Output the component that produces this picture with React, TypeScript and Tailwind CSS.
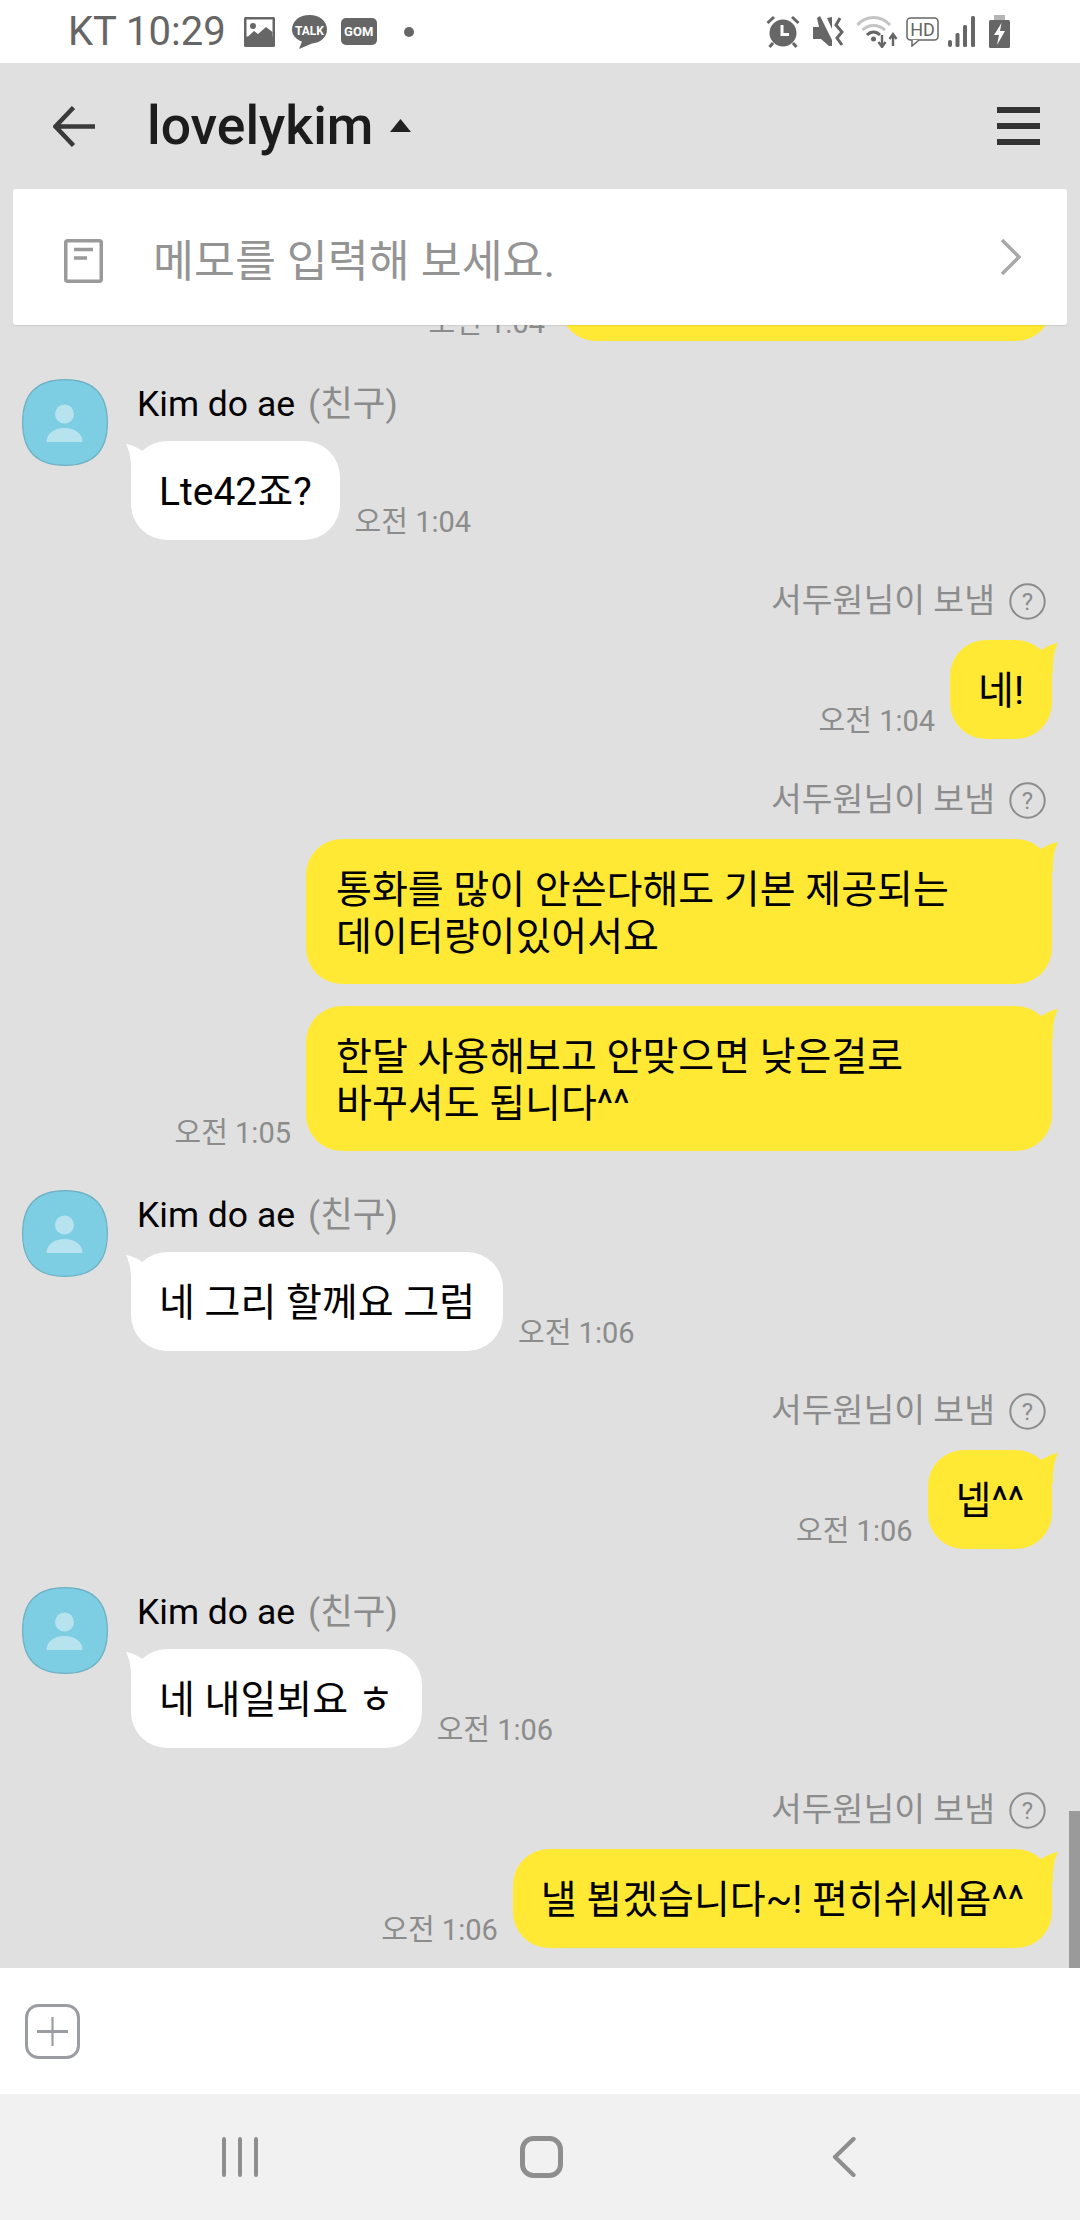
import React from "react";

function Avatar() {
  return (
    <svg width="86" height="87" viewBox="0 0 86 87" className="shrink-0">
      <path d="M43 0.6 C70 0.6 85.4 14 85.4 43.5 C85.4 73 70 86.4 43 86.4 C16 86.4 0.6 73 0.6 43.5 C0.6 14 16 0.6 43 0.6 Z" fill="#7dcde3" stroke="#6fb1c4" strokeWidth="1.2" />
      <circle cx="42.5" cy="35" r="9.5" fill="#b7e3ef" />
      <path d="M24.5 63 C24.5 54 33 49 42.5 49 C52 49 60.5 54 60.5 63 Z" fill="#b7e3ef" />
    </svg>
  );
}

function TailLeft() {
  return (
    <svg width="26" height="30" viewBox="0 0 26 30" className="absolute -left-[5px] top-[3px]">
      <path d="M0 0 C6 0.8 11 3.5 16.5 7 L26 2 L26 30 L5 30 C5.5 17 4 8 0 0 Z" fill="#ffffff" />
    </svg>
  );
}

function TailRight() {
  return (
    <svg width="26" height="30" viewBox="0 0 26 30" className="absolute -right-[6px] top-[3px]">
      <path d="M26 0 C20 0.8 15 3.5 9.5 7 L0 2 L0 30 L21 30 C20.5 17 22 8 26 0 Z" fill="#ffe934" />
    </svg>
  );
}

function Time({ t }: { t: string }) {
  return <span className="text-[29px] leading-[32px] mb-[2px] text-[#8c8c8c] whitespace-nowrap">{t}</span>;
}

function Received({ text, time, mb }: { text: string; time: string; mb: string }) {
  return (
    <div className={`flex pl-[22px] gap-[23px] ${mb}`}>
      <Avatar />
      <div className="flex flex-col">
        <div className="flex items-center gap-[13px] pl-[6px] pt-[2px] h-[50px] mb-[12px] text-[35.5px]">
          <span className="text-black">Kim do ae</span>
          <span className="text-[#8c8c8c]">(친구)</span>
        </div>
        <div className="flex items-end gap-[15px]">
          <div className="relative bg-white rounded-[36px] px-[28px] pt-[3px] h-[99px] flex items-center text-[39px] text-black whitespace-nowrap">
            <TailLeft />
            <span className="relative">{text}</span>
          </div>
          <Time t={time} />
        </div>
      </div>
    </div>
  );
}

function SentBy() {
  return (
    <div className="flex items-center justify-end gap-[14px] pr-[34px] h-[37px] mb-[20px] text-[33.5px] text-[#8c8c8c]">
      <span>서두원님이 보냄</span>
      <svg width="37" height="37" viewBox="0 0 37 37">
        <circle cx="18.5" cy="18.5" r="17.2" fill="none" stroke="#8c8c8c" strokeWidth="2" />
        <text x="18.5" y="27" textAnchor="middle" fontSize="24" fill="#8c8c8c">?</text>
      </svg>
    </div>
  );
}

function SentBubble({ lines, time, mb, big }: { lines: string[]; time?: string; mb: string; big?: boolean }) {
  return (
    <div className={`flex items-end justify-end gap-[15px] pr-[28px] ${mb}`}>
      {time ? <Time t={time} /> : null}
      <div
        className={`relative bg-[#ffe934] rounded-[36px] flex flex-col justify-center text-[39px] leading-[47px] text-black whitespace-nowrap ${
          big ? "w-[746px] h-[145px] px-[30px] pt-[5px]" : "h-[99px] px-[28px] pt-[4px]"
        }`}
      >
        <TailRight />
        {lines.map((l) => (
          <div key={l} className="relative">{l}</div>
        ))}
      </div>
    </div>
  );
}

export default function App() {
  return (
    <div
      className="w-[1080px] h-[2220px] flex flex-col overflow-hidden bg-[#e0e0e0]"
      style={{ fontFamily: 'Roboto, "Noto Sans CJK KR", sans-serif' }}
    >
      {/* status bar */}
      <div className="h-[63px] bg-white flex items-center justify-between pl-[68px] pr-[70px] shrink-0">
        <div className="flex items-center">
          <span className="text-[40px] text-[#666666] mr-[18px] whitespace-nowrap">KT 10:29</span>
          <svg width="31" height="30" viewBox="0 0 31 30" className="mr-[17px]">
            <rect x="0" y="0" width="31" height="30" rx="1.5" fill="#666666" />
            <rect x="2.5" y="2.5" width="26" height="17" fill="#ffffff" />
            <circle cx="9" cy="9" r="3" fill="#666666" />
            <path d="M2.5 21 L10 14 L14 17 L22 10 L28.5 15 L28.5 27.5 L2.5 27.5 Z" fill="#666666" />
          </svg>
          <svg width="35" height="34" viewBox="0 0 35 34" className="mr-[14px]">
            <path d="M17.5 0 C27.5 0 35 6 35 14.5 C35 22.5 28 28 20 28.5 L7 34 L10 26.5 C4 24.5 0 20 0 14.5 C0 6 7.5 0 17.5 0 Z" fill="#666666" />
            <text x="17.5" y="19.5" textAnchor="middle" fontSize="12" fontWeight="700" fill="#fff" fontFamily="Roboto">TALK</text>
          </svg>
          <div className="w-[36px] h-[27px] rounded-[5px] bg-[#666666] text-white text-[13px] font-bold flex items-center justify-center leading-none mr-[27px]">GOM</div>
          <div className="w-[10px] h-[10px] rounded-full bg-[#666666]" />
        </div>
        <div className="flex items-center">
          <svg width="34" height="33" viewBox="0 0 34 33">
            <circle cx="17" cy="18" r="13.5" fill="#666666" />
            <path d="M16 10 V19.5 H23" stroke="#fff" strokeWidth="3" fill="none" />
            <path d="M1.5 8 L8 2 M32.5 8 L26 2 M7 28 L3.5 32 M27 28 L30.5 32" stroke="#666666" strokeWidth="3" fill="none" />
          </svg>
          <svg width="32" height="33" viewBox="0 0 32 33" className="ml-[12px]">
            <path d="M1 12 H7 L5 3 L8 1 L20 25 L20 31 L17 31 L9 24 H1 Z" fill="#666666" />
            <path d="M15 3 L20 2 L20 14 Z" fill="#666666" />
            <path d="M28 3 L24 10 L30 17 L25 23 L30 30" stroke="#666666" strokeWidth="3" fill="none" />
          </svg>
          <svg width="42" height="33" viewBox="0 0 42 33" className="ml-[12px]">
            <path d="M1.5 10 C10 0 25 0 34 10" stroke="#c4c4c4" strokeWidth="3" fill="none" />
            <path d="M6.5 15 C13 9 22 9 29 15" stroke="#c4c4c4" strokeWidth="3" fill="none" />
            <path d="M11 20 C15 16 20 16 24 20" stroke="#666666" strokeWidth="3" fill="none" />
            <circle cx="17.5" cy="24" r="2.5" fill="#666666" />
            <path d="M26 20 V31 M22.5 27 L26 32 L29.5 27" stroke="#666666" strokeWidth="2.4" fill="none" />
            <path d="M37 31 V19 M33.5 24 L37 19 L40.5 24" stroke="#666666" strokeWidth="2.4" fill="none" />
          </svg>
          <svg width="33" height="30" viewBox="0 0 33 30" className="ml-[8px]">
            <rect x="1" y="1" width="31" height="22" rx="3.5" fill="none" stroke="#666666" strokeWidth="1.5" />
            <path d="M6 23 V29 L13 23" fill="#fff" stroke="#666666" strokeWidth="1.5" />
            <text x="16.5" y="18.5" textAnchor="middle" fontSize="18" fill="#666666" fontFamily="Roboto">HD</text>
          </svg>
          <svg width="27" height="31" viewBox="0 0 27 31" className="ml-[9px]">
            <rect x="0" y="24" width="4" height="7" rx="2" fill="#666666" />
            <rect x="7.5" y="17" width="4" height="14" rx="1.5" fill="#666666" />
            <rect x="15" y="9" width="4" height="22" rx="1.5" fill="#666666" />
            <rect x="23" y="0" width="4" height="31" rx="1.5" fill="#666666" />
          </svg>
          <svg width="21" height="33" viewBox="0 0 21 33" className="ml-[14px]">
            <rect x="5" y="0" width="11" height="5" fill="#b5b5b5" />
            <rect x="0" y="5" width="21" height="28" rx="1.5" fill="#666666" />
            <path d="M12.5 8 L5 20 H10 L8 30 L16 16 H11 Z" fill="#fff" />
          </svg>
        </div>
      </div>

      {/* main */}
      <div className="relative flex-1 min-h-0 flex flex-col">
        {/* header */}
        <div className="h-[126px] shrink-0 flex items-center pl-[53px] pr-[40px]">
          <svg width="42" height="41" viewBox="0 0 42 41" className="mr-[52px]">
            <path d="M42 20.5 H3 M20.5 1.5 L2.5 20.5 L20.5 39.5" stroke="#3a3a3a" strokeWidth="4.5" fill="none" />
          </svg>
          <span className="text-[53.5px] font-medium text-[#1c1c1c]">lovelykim</span>
          <svg width="21" height="13" viewBox="0 0 21 13" className="ml-[17px] -mt-[2px]">
            <path d="M10.5 0 L21 13 H0 Z" fill="#222222" />
          </svg>
          <div className="ml-auto flex flex-col gap-[10px]">
            <div className="w-[43px] h-[6px] bg-[#333333]" />
            <div className="w-[43px] h-[6px] bg-[#333333]" />
            <div className="w-[43px] h-[6px] bg-[#333333]" />
          </div>
        </div>

        {/* chat */}
        <div className="relative flex-1 min-h-0 overflow-hidden flex flex-col justify-end pb-[20px]">
          <div className="flex items-end justify-end gap-[15px] pr-[28px] mb-[38px]">
            <Time t="오전 1:04" />
            <div className="w-[492px] h-[99px] bg-[#ffe934] rounded-[36px]" />
          </div>
          <Received text="Lte42죠?" time="오전 1:04" mb="mb-[43px]" />
          <SentBy />
          <SentBubble lines={["네!"]} time="오전 1:04" mb="mb-[43px]" />
          <SentBy />
          <SentBubble big lines={["통화를 많이 안쓴다해도 기본 제공되는", "데이터량이있어서요"]} mb="mb-[22px]" />
          <SentBubble big lines={["한달 사용해보고 안맞으면 낮은걸로", "바꾸셔도 됩니다^^"]} time="오전 1:05" mb="mb-[39px]" />
          <Received text="네 그리 할께요 그럼" time="오전 1:06" mb="mb-[42px]" />
          <SentBy />
          <SentBubble lines={["넵^^"]} time="오전 1:06" mb="mb-[38px]" />
          <Received text="네 내일뵈요 ㅎ" time="오전 1:06" mb="mb-[44px]" />
          <SentBy />
          <SentBubble lines={["낼 뵙겠습니다~! 편히쉬세욤^^"]} time="오전 1:06" mb="mb-0" />
          <div className="absolute right-0 bottom-0 w-[11px] h-[157px] bg-[#9a9a9a]" />
        </div>

        {/* memo */}
        <div className="absolute left-[13px] top-[126px] w-[1054px] h-[136px] bg-white rounded-[3px] flex items-center pl-[51px] pr-[46px] shadow-[0_1px_1px_rgba(0,0,0,0.08)]">
          <svg width="39" height="44" viewBox="0 0 39 44" className="mr-[50px] mt-[8px]">
            <rect x="1.75" y="1.75" width="35.5" height="40.5" rx="2" fill="none" stroke="#9a9a9a" strokeWidth="3.5" />
            <path d="M10 10.5 H29 M10 19 H23" stroke="#9a9a9a" strokeWidth="3.5" fill="none" />
          </svg>
          <span className="text-[44.5px] text-[#949494] whitespace-nowrap mt-[11px]">메모를 입력해 보세요.</span>
          <svg width="21" height="38" viewBox="0 0 21 38" className="ml-auto">
            <path d="M2 2 L19 19 L2 36" stroke="#a8a8a8" strokeWidth="3.5" fill="none" />
          </svg>
        </div>

        {/* input */}
        <div className="h-[126px] shrink-0 bg-white flex items-center pl-[25px]">
          <svg width="55" height="55" viewBox="0 0 55 55">
            <rect x="1.5" y="1.5" width="52" height="52" rx="12" fill="none" stroke="#9a9ea3" strokeWidth="3" />
            <path d="M27.5 13 V42" stroke="#9a9ea3" strokeWidth="2.2" fill="none" />
            <path d="M12 27.5 H43" stroke="#9a9ea3" strokeWidth="3" fill="none" />
          </svg>
        </div>

        {/* nav */}
        <div className="h-[126px] shrink-0 bg-[#f1f1f1] flex items-center pl-[222px]">
          <svg width="36" height="40" viewBox="0 0 36 40">
            <path d="M2 2 V38 M18 2 V38 M34 2 V38" stroke="#8e8e8e" strokeWidth="4" strokeLinecap="round" fill="none" />
          </svg>
          <svg width="43" height="42" viewBox="0 0 43 42" className="ml-[262px]">
            <rect x="2.5" y="2.5" width="38" height="37" rx="11" fill="none" stroke="#8e8e8e" strokeWidth="5" />
          </svg>
          <svg width="24" height="40" viewBox="0 0 24 40" className="ml-[269px]">
            <path d="M21.5 2 L3 20 L21.5 38" stroke="#8e8e8e" strokeWidth="4.2" strokeLinecap="round" strokeLinejoin="round" fill="none" />
          </svg>
        </div>
      </div>
    </div>
  );
}
